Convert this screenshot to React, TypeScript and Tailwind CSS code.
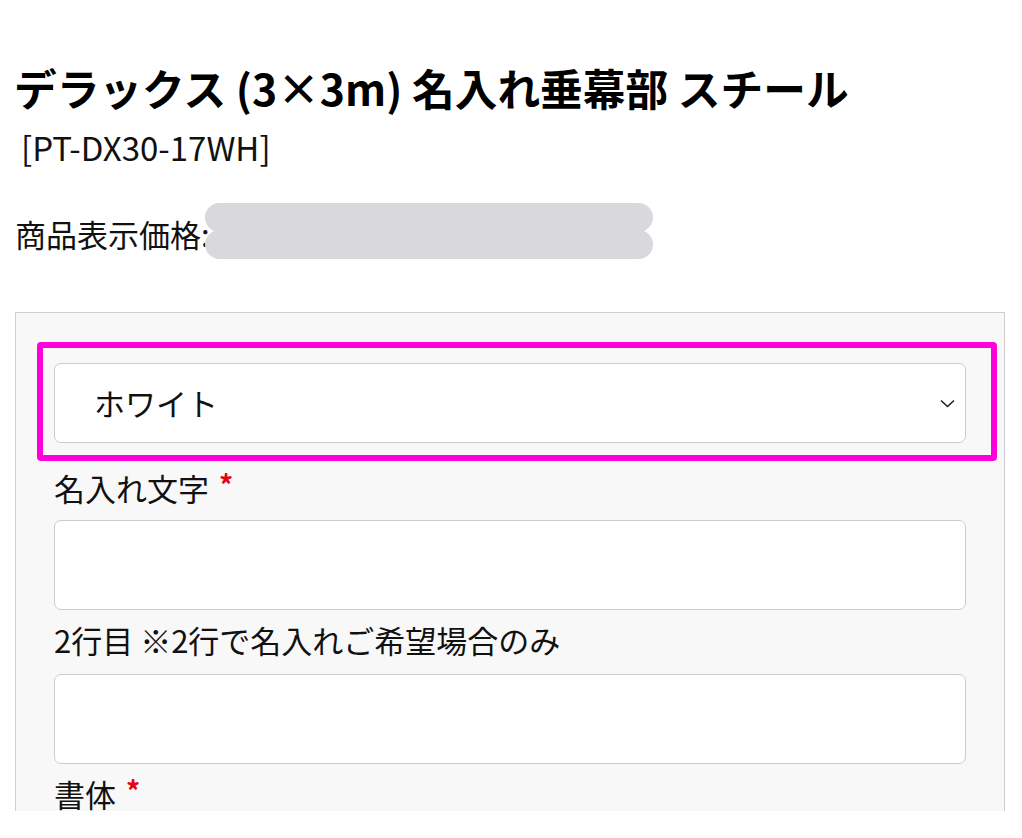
const Field = ({ label, required }: { label: string; required?: boolean }) => (
  <div className="text-[31px] leading-[40px] text-[#111]">
    {label}
    {required && <span className="ml-[10px] align-top text-[28px] font-bold leading-[32px] text-[#e50012]">*</span>}
  </div>
);

export default function App() {
  return (
    <div className="h-[838px] w-[1022px] overflow-hidden bg-white font-['Noto_Sans_CJK_JP','Noto_Sans',sans-serif] text-[#111]">
      <div className="h-[811px] overflow-hidden pl-[14px] pr-[15px] pt-[57px]">
        <h1 className="text-[42.7px] font-bold leading-[60px] text-black">
          デラックス (3×3m) 名入れ垂幕部 スチール
        </h1>
        <div className="mt-[10px] pl-[7px] text-[33px] leading-[40px]">[PT-DX30-17WH]</div>
        <div className="relative mt-[47px] pl-[1px] text-[31px] leading-[40px]">
          商品表示価格:
          {/* redaction */}
          <div className="absolute left-[191px] top-[-11px] h-[56px] w-[448px]">
            <div className="h-[29px] w-full rounded-full bg-[#d9d8dc]" />
            <div className="-mt-[2px] h-[29px] w-full rounded-full bg-[#d9d8dc]" />
          </div>
        </div>

        <div className="ml-[1px] mr-[2px] mt-[58px] border border-[#cfcfcf] bg-[#f8f8f8] pb-10 pl-[38px] pr-[38px] pt-[50px]">
          <div className="relative">
            <div className="flex h-[80px] items-center justify-between rounded-[7px] border border-[#cccccc] bg-white pl-[39px] pr-[9px] text-[31px]">
              <span>ホワイト</span>
              <svg width="15" height="9" viewBox="0 0 15 9" fill="none" className="mr-[1px]">
                <path d="M1 1.5l6.5 6 6.5-6" stroke="#222" strokeWidth="1.6" />
              </svg>
            </div>
            <div className="pointer-events-none absolute -bottom-[18px] -left-[17px] -right-[31px] -top-[21px] rounded-[4px] border-[6px] border-[#ff00dd]" />
          </div>

          <div className="mt-[25px]">
            <Field label="名入れ文字" required />
          </div>
          <div className="mt-[12px] h-[90px] rounded-[7px] border border-[#cccccc] bg-white" />

          <div className="mt-[10px]">
            <Field label="2行目 ※2行で名入れご希望場合のみ" />
          </div>
          <div className="mt-[14px] h-[90px] rounded-[7px] border border-[#cccccc] bg-white" />

          <div className="mt-[10px]">
            <Field label="書体" required />
          </div>
          <div className="mt-[12px] h-[90px] rounded-[7px] border border-[#cccccc] bg-white" />
        </div>
      </div>
    </div>
  );
}
